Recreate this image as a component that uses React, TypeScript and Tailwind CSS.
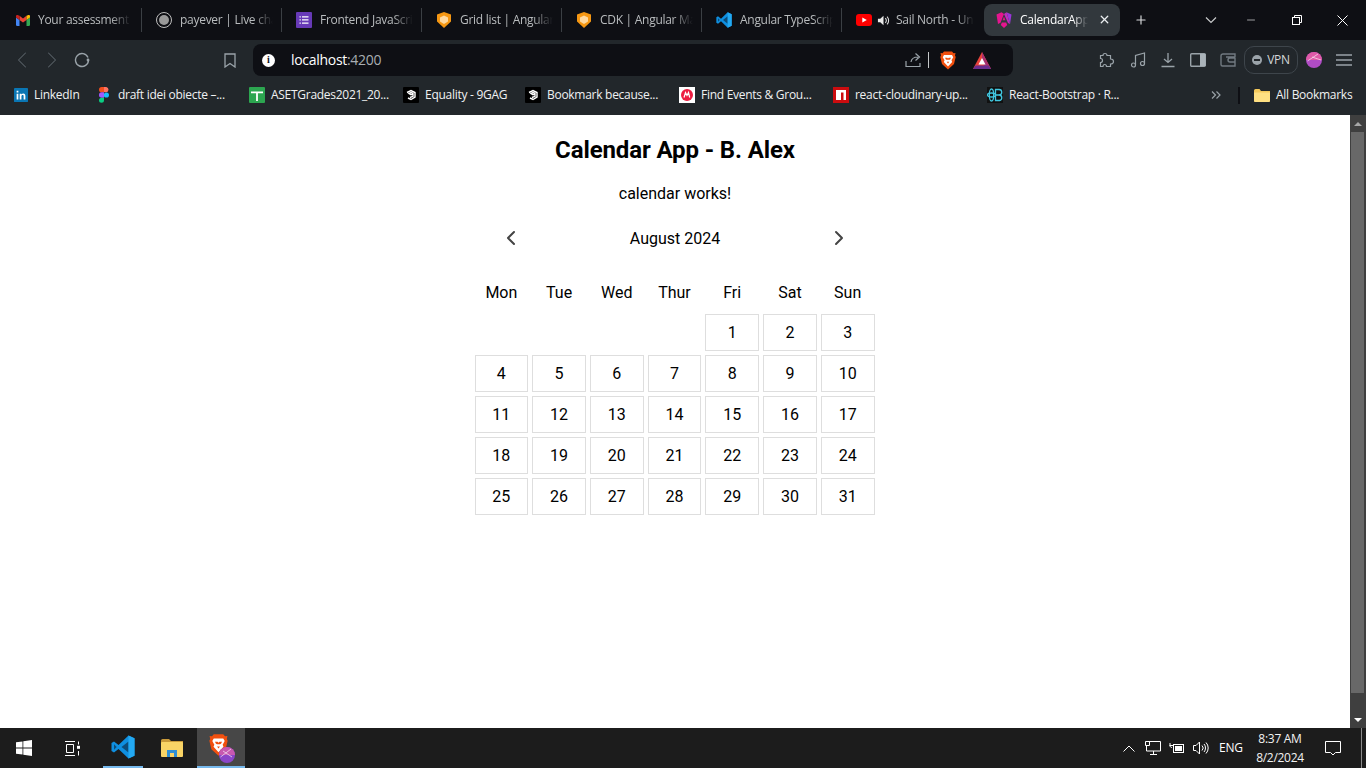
import { ChevronLeft, ChevronRight, Plus, X, Minus } from "lucide-react";
import type { ReactNode } from "react";

const uiFont = "font-['Open_Sans','Noto_Sans',sans-serif] tracking-[-0.28px]";

function Gmail() {
  return (
    <svg viewBox="0 0 16 13" className="w-[14px] h-[11px] shrink-0" preserveAspectRatio="none">
      <path d="M0 3v8.500A1.500 1.500 0 0 0 1.500 13H4V6z" fill="#4285f4" />
      <path d="M12 6v7h2.500a1.500 1.500 0 0 0 1.500-1.500V3z" fill="#34a853" />
      <path d="M4 6l4 3 4-3V1L8 4 4 1z" fill="#ea4335" />
      <path d="M0 3l4 3V1L2.500.2A1.600 1.600 0 0 0 0 2z" fill="#c5221f" />
      <path d="M12 1v5l4-3V2A1.600 1.600 0 0 0 13.500.2z" fill="#fbbc04" />
    </svg>
  );
}

function RecordIcon() {
  return (
    <div className="w-4 h-4 rounded-full border border-[#bdbdbd] flex items-center justify-center shrink-0">
      <div className="w-[10px] h-[10px] rounded-full bg-[#9a9a9a]" />
    </div>
  );
}

function FormIcon() {
  return (
    <svg viewBox="0 0 16 16" className="w-4 h-4 shrink-0">
      <rect width="16" height="16" rx="1" fill="#673ab7" />
      <path d="M3.500 4.200h1.300v1.300H3.500zM6 4.200h6.500v1.300H6zM3.500 7.300h1.300v1.300H3.500zM6 7.300h6.500v1.300H6zM3.500 10.400h1.300v1.300H3.500zM6 10.400h6.500v1.300H6z" fill="#fff" />
    </svg>
  );
}

function ShieldIcon() {
  return (
    <svg viewBox="0 0 16 16" className="w-4 h-4 shrink-0">
      <path d="M8 0l7 2.500v7L8 16 1 9.500v-7z" fill="#f59713" />
      <path d="M8 3.500l4 2v4l-4 2.500-4-2.500v-4z" fill="#ffd9a0" />
    </svg>
  );
}

function VsCode({ className }: { className: string }) {
  return (
    <svg viewBox="0 0 24 24" className={className}>
      <path d="M17.500 0.500L23.500 3.300V20.700L17.500 23.500L7.500 14L3 17.500L0.500 16V8L3 6.500L7.500 10z" fill="#0f8fe0" />
      <path d="M17.500 6.500L10.500 12L17.500 17.500zM3 9.200V14.800L5.700 12z" fill="#0b2a44" fillOpacity="0.65" />
      <path d="M17.500 0.500L23.500 3.300V20.700L17.500 23.500z" fill="#23a9f2" />
    </svg>
  );
}

function YoutubeIcon() {
  return (
    <svg viewBox="0 0 16 12" className="w-4 h-3 shrink-0">
      <rect width="16" height="12" rx="3" fill="#f00" />
      <path d="M6.300 3.500L10.800 6 6.300 8.500z" fill="#fff" />
    </svg>
  );
}

function SpeakerIcon() {
  return (
    <svg viewBox="0 0 14 14" className="w-[13px] h-[13px] shrink-0" fill="none">
      <path d="M1 5h2.500L7 2v10L3.500 9H1z" fill="#e8e8e8" />
      <path d="M9 4.500a3.500 3.500 0 0 1 0 5M10.800 2.800a6 6 0 0 1 0 8.400" stroke="#e8e8e8" strokeWidth="1.100" />
    </svg>
  );
}

function AngularIcon() {
  return (
    <svg viewBox="0 0 16 16" className="w-4 h-4 shrink-0">
      <path d="M10.500 0.200L15.500 2.500 14 12z" fill="#9a36d8" />
      <path d="M5.500 0.200L0.500 2.500 2 12 4.500 10.800 8 2z" fill="#e5158f" />
      <path d="M5.800 10.500h4.400L11.200 13 8 16 4.800 13z" fill="#e5158f" />
      <path d="M8 4.500L9.400 8.300H6.600z" fill="#e5158f" />
      <path d="M10.500 .2L8 2l4 9 2 1z" fill="#c22bbd" />
    </svg>
  );
}

type TabInfo = { title: string; icon: ReactNode };

const tabs: TabInfo[] = [
  { title: "Your assessment at", icon: <Gmail /> },
  { title: "payever | Live chat", icon: <RecordIcon /> },
  { title: "Frontend JavaScript", icon: <FormIcon /> },
  { title: "Grid list | Angular Material", icon: <ShieldIcon /> },
  { title: "CDK | Angular Material", icon: <ShieldIcon /> },
  { title: "Angular TypeScript", icon: <VsCode className="w-4 h-4 shrink-0" /> },
];

function Tab({ tab }: { tab: TabInfo }) {
  return (
    <div className="w-[140px] h-[24px] shrink-0 flex items-center pl-[14px] gap-[8px] border-r border-[#3b3f44]">
      {tab.icon}
      <div className="w-[93px] overflow-hidden whitespace-nowrap text-[12px] text-[#b9bcbe] [mask-image:linear-gradient(to_right,black_78%,transparent)]">
        {tab.title}
      </div>
    </div>
  );
}

function TabStrip() {
  return (
    <div className={`h-10 bg-[#0e0f14] flex items-center pl-[2px] shrink-0 ${uiFont}`}>
      {tabs.map((t) => (
        <Tab key={t.title} tab={t} />
      ))}
      <div className="w-[140px] h-[24px] shrink-0 flex items-center pl-[14px] gap-[5px]">
        <YoutubeIcon />
        <SpeakerIcon />
        <div className="w-[78px] overflow-hidden whitespace-nowrap text-[12px] text-[#b9bcbe] [mask-image:linear-gradient(to_right,black_78%,transparent)] ml-[1px]">
          Sail North - Un
        </div>
      </div>
      <div className="w-[136px] h-8 mt-[-1px] ml-[2px] shrink-0 rounded-[8px] bg-[#32383d] flex items-center pl-[12px] gap-[8px]">
        <AngularIcon />
        <div className="w-[68px] overflow-hidden whitespace-nowrap text-[12px] text-white [mask-image:linear-gradient(to_right,black_78%,transparent)]">
          CalendarApp
        </div>
        <X size={13} strokeWidth={2.4} className="text-[#eceff1] ml-[2px]" />
      </div>
      <Plus size={14} strokeWidth={2} className="text-[#d8dadb] ml-[14px]" />
      <div className="flex items-center ml-auto">
        <svg viewBox="0 0 12 8" className="w-3 h-2 mr-[28px]" fill="none">
          <path d="M1 1.500L6 6.500 11 1.500" stroke="#c8cacb" strokeWidth="1.200" />
        </svg>
        <Minus size={12} strokeWidth={1.200} className="text-white mr-[35px]" />
        <svg viewBox="0 0 10 10" className="w-[10px] h-[10px] mr-[35px]" fill="none" stroke="#fff" strokeWidth="1">
          <rect x="0.500" y="2.500" width="7" height="7" />
          <path d="M2.500 2.500V.5h7v7H7.500" />
        </svg>
        <svg viewBox="0 0 11 11" className="w-[11px] h-[11px] mr-[18px]" fill="none" stroke="#fff" strokeWidth="1">
          <path d="M.5.5l10 10M10.500.5l-10 10" />
        </svg>
      </div>
    </div>
  );
}

function BraveIcon({ className }: { className: string }) {
  return (
    <svg viewBox="0 0 16 18" className={className}>
      <path d="M4 0h8l1.500 1.700L15.500 1.500 15 4l.7 1.500-1.700 7L8 18 2 12.500.3 5.500 1 4 .5 1.500 2.500 1.700z" fill="#f1500f" />
      <path d="M4 3.500h8l1.200 2.200-1.700 3 .7 1.800L8 15l-4.200-4.500.7-1.800-1.700-3z" fill="#fff" />
      <path d="M5 6.200h2.200L8 7l.8-.8H11l-.9 1.800-.9.300H6.800l-.9-.3zM6.800 10.300h2.400L8 12z" fill="#f1500f" />
    </svg>
  );
}

function Toolbar() {
  const stroke = "#9aa3a9";
  return (
    <div className="h-10 bg-[#22272b] flex items-center shrink-0">
      <div className="w-[253px] flex items-center shrink-0 pl-[8px]">
        <ChevronLeft size={28} strokeWidth={0.9} className="text-[#596168] mr-[2px]" />
        <ChevronRight size={28} strokeWidth={0.9} className="text-[#596168] mr-[8px]" />
        <svg viewBox="0 0 16 16" className="w-4 h-4 mr-[134px]" fill="none">
          <path d="M14 5.500A6.500 6.500 0 1 0 14.500 8" stroke={stroke} strokeWidth="1.400" />
          <circle cx="14" cy="8" r="1.400" fill={stroke} />
        </svg>
        <svg viewBox="0 0 12 15" className="w-[12px] h-[15px]" fill="none">
          <path d="M1 1h10v13L6 10.500 1 14z" stroke={stroke} strokeWidth="1.300" />
        </svg>
      </div>
      <div className="w-[760px] h-8 rounded-[8px] bg-[#0e0f14] flex items-center pl-[9px] shrink-0">
        <div className="w-[13px] h-[13px] rounded-full bg-white flex items-center justify-center text-[#0e0f14] text-[10px] font-bold leading-none font-['Liberation_Serif',serif]">
          i
        </div>
        <div className="ml-[16px] text-[14px] leading-none font-['Open_Sans','Noto_Sans',sans-serif] tracking-[-0.3px]">
          <span className="text-white">localhost</span>
          <span className="text-[#a9aeb2]">:4200</span>
        </div>
        <svg viewBox="0 0 16 16" className="w-4 h-4 ml-auto" fill="none">
          <path d="M1 9v5.500h14V11M6 10c.5-3.500 3-5 7-5M10.500 1.500L14.500 5l-4 3.500" stroke={stroke} strokeWidth="1.200" />
        </svg>
        <div className="w-px h-4 bg-[#c5c8ca] ml-[7px]" />
        <BraveIcon className="w-4 h-[19px] ml-[11px]" />
        <svg viewBox="0 0 18 17" className="w-[18px] h-[17px] ml-[17px] mr-[22px]">
          <path d="M9 0L18 17H0z" fill="#e8423b" />
          <path d="M9 0L18 17H12L9 6z" fill="#a8306f" />
          <path d="M2.500 13.500h13L18 17H0z" fill="#6a2d8f" />
          <path d="M9 6l3.500 6.500h-7z" fill="#fff" />
        </svg>
      </div>
      <div className="flex items-center shrink-0 flex-1">
        <svg viewBox="0 0 16 16" className="w-4 h-4 ml-[86px]" fill="none">
          <path d="M6 1.500c1.500 0 2 1 2 2h3.500V7c1.500 0 3 .5 3 2.500S13 12 11.500 12v2.500H7.500c0-1.500-.5-2-1.800-2S4 13 4 14.500H1.500V10.500c1.200 0 2-.5 2-2s-1-2-2-2V3.500H4c0-1 .5-2 2-2z" stroke={stroke} strokeWidth="1.200" />
        </svg>
        <svg viewBox="0 0 16 16" className="w-4 h-4 ml-[15px]" fill="none" stroke={stroke} strokeWidth="1.200">
          <circle cx="3.500" cy="13" r="2" />
          <circle cx="12.500" cy="11.500" r="2" />
          <path d="M5.500 13V3.500L14.500 1v10.500" />
        </svg>
        <svg viewBox="0 0 16 16" className="w-4 h-4 ml-[14px]" fill="none" stroke={stroke} strokeWidth="1.300">
          <path d="M8 1v9.500M4 7l4 3.500L12 7M1.500 14.500h13" />
        </svg>
        <svg viewBox="0 0 16 14" className="w-4 h-[14px] ml-[14px]">
          <rect x="0.700" y="0.700" width="14.600" height="12.600" rx="1" fill="none" stroke={stroke} strokeWidth="1.400" />
          <rect x="10" y="1" width="5.500" height="12" fill="#aab3b9" />
        </svg>
        <svg viewBox="0 0 16 14" className="w-4 h-[14px] ml-[14px]" fill="none" stroke="#717a81" strokeWidth="1.400">
          <path d="M15 4V1H3a2 2 0 0 0-2 2v8.500A1.500 1.500 0 0 0 2.500 13H15V9M15 4H6M15 5H10a2 2 0 0 0 0 4h5z" />
        </svg>
        <div className={`ml-[8px] w-[54px] h-7 rounded-[10px] border border-[#3e454b] flex items-center justify-center gap-[5px] text-[12px] text-[#d4d7d9] ${uiFont}`}>
          <div className="w-[10px] h-[10px] rounded-full bg-[#9ba3a9] flex items-center justify-center">
            <div className="w-[6px] h-[1.500px] bg-[#22272b]" />
          </div>
          VPN
        </div>
        <svg viewBox="0 0 16 16" className="w-4 h-4 ml-[8px]" fill="none">
          <circle cx="8" cy="8" r="8" fill="#b04cc5" />
          <path d="M0 8a8 8 0 0 1 16 0z" fill="#e05aa8" />
          <path d="M1.500 9L12 2M6 5l9 3" stroke="#f7d6e8" strokeWidth="0.800" />
        </svg>
        <svg viewBox="0 0 16 12" className="w-4 h-3 ml-[14px]" fill="none" stroke={stroke} strokeWidth="1.300">
          <path d="M0 1h16M0 6h16M0 11h16" />
        </svg>
      </div>
    </div>
  );
}

function Bookmark({ icon, label, width }: { icon: ReactNode; label: string; width: string }) {
  return (
    <div className={`${width} shrink-0 flex items-center gap-[6px] whitespace-nowrap`}>
      <div className="w-4 h-4 shrink-0 flex items-center justify-center">{icon}</div>
      <span>{label}</span>
    </div>
  );
}

function NineGag() {
  return (
    <svg viewBox="0 0 16 16" className="w-4 h-4">
      <rect width="16" height="16" rx="1" fill="#000" />
      <path d="M4 5.500L8 3.500l4 2v4.500L8 12.500 5 11M10 6.500L8 5.500 6 6.500 8 7.800l2-1v2.500L7 10.500" fill="none" stroke="#fff" strokeWidth="1.400" />
    </svg>
  );
}

function BookmarksBar() {
  return (
    <div className={`h-[35px] bg-[#22272b] flex items-center pl-[12px] text-[12px] text-[#f0f1f2] shrink-0 pb-[5px] ${uiFont}`}>
      <Bookmark
        width="w-[84px]"
        label="LinkedIn"
        icon={
          <svg viewBox="0 0 16 16" className="w-[14px] h-[14px] ml-px">
            <rect width="16" height="16" rx="1" fill="#0a76b4" />
            <path d="M3 6.500h2V13H3zM3 3.200h2v2H3zM6.500 6.500h2v1c.5-.8 1.200-1.200 2.200-1.200 1.700 0 2.300 1.100 2.300 2.900V13h-2V9.500c0-1-.3-1.500-1.100-1.500-.9 0-1.400.6-1.400 1.700V13h-2z" fill="#fff" />
          </svg>
        }
      />
      <Bookmark
        width="w-[153px]"
        label="draft idei obiecte –..."
        icon={
          <svg viewBox="0 0 10 16" className="w-[10px] h-4">
            <path d="M0 2.700A2.700 2.700 0 0 1 2.700 0H5v5.300H2.700A2.700 2.700 0 0 1 0 2.700z" fill="#f24e1e" />
            <path d="M5 0h2.300a2.700 2.700 0 0 1 0 5.300H5z" fill="#ff7262" />
            <path d="M0 8a2.700 2.700 0 0 1 2.700-2.700H5v5.400H2.700A2.700 2.700 0 0 1 0 8z" fill="#a259ff" />
            <circle cx="7.400" cy="8" r="2.600" fill="#1abcfe" />
            <path d="M0 13.300a2.700 2.700 0 0 1 2.700-2.600H5v2.600a2.500 2.500 0 0 1-5 0z" fill="#0acf83" />
          </svg>
        }
      />
      <Bookmark
        width="w-[154px]"
        label="ASETGrades2021_20..."
        icon={
          <svg viewBox="0 0 16 16" className="w-4 h-4">
            <rect width="16" height="16" rx="1" fill="#2ca650" />
            <path d="M2 4.500H14V6.300H8.900V14H7.100V6.300H2z" fill="#fff" />
          </svg>
        }
      />
      <Bookmark width="w-[122px]" label="Equality - 9GAG" icon={<NineGag />} />
      <Bookmark width="w-[154px]" label="Bookmark because..." icon={<NineGag />} />
      <Bookmark
        width="w-[154px]"
        label="Find Events & Grou..."
        icon={
          <svg viewBox="0 0 16 16" className="w-4 h-4">
            <rect width="16" height="16" fill="#fff" />
            <circle cx="8" cy="8" r="6" fill="#ed1c40" />
            <path d="M5 10.500l1.500-5 1.500 3 1.500-3 1.200 5" fill="none" stroke="#fff" strokeWidth="1.200" />
          </svg>
        }
      />
      <Bookmark
        width="w-[154px]"
        label="react-cloudinary-up..."
        icon={
          <svg viewBox="0 0 16 16" className="w-4 h-4">
            <rect width="16" height="16" fill="#cb0c0f" />
            <path d="M3 3h10v10h-2.500V5.500H8V13H3z" fill="#fff" />
          </svg>
        }
      />
      <Bookmark
        width="w-[224px]"
        label="React-Bootstrap · R..."
        icon={
          <svg viewBox="0 0 16 16" className="w-4 h-4" fill="none" stroke="#41c7e0" strokeWidth="1.300">
            <rect width="16" height="16" fill="#111" stroke="none" />
            <ellipse cx="4.500" cy="8" rx="2.200" ry="6" />
            <ellipse cx="4.500" cy="8" rx="4" ry="2" />
            <path d="M8.500 2.500h3.500a2.700 2.700 0 0 1 0 5.500H8.500zM8.500 8h4a2.800 2.800 0 0 1 0 5.500h-4z" />
          </svg>
        }
      />
      <svg viewBox="0 0 10 8" className="w-[10px] h-2" fill="none" stroke="#99a1a7" strokeWidth="1.200">
        <path d="M1 .5L4.500 4 1 7.500M5.500 .5L9 4 5.500 7.500" />
      </svg>
      <div className="w-[2px] h-[17px] bg-[#0e0f14] ml-[17px] mr-[14px]" />
      <svg viewBox="0 0 16 13" className="w-4 h-[13px] mr-[6px] shrink-0">
        <path d="M0 1.500A1.500 1.500 0 0 1 1.500 0h4L7 2H16v9.500a1.500 1.500 0 0 1-1.500 1.500h-13A1.500 1.500 0 0 1 0 11.500z" fill="#f5c95a" />
        <path d="M0 3.500h16v8a1.500 1.500 0 0 1-1.500 1.500h-13A1.500 1.500 0 0 1 0 11.500z" fill="#ffe082" />
      </svg>
      <span className="whitespace-nowrap">All Bookmarks</span>
    </div>
  );
}

const weekDays = ["Mon", "Tue", "Wed", "Thur", "Fri", "Sat", "Sun"];
const days = Array.from({ length: 31 }, (_, i) => i + 1);

function Calendar() {
  return (
    <div className="flex-1 min-w-0 flex flex-col items-center font-['Roboto',sans-serif] text-[16px] text-black">
      <h1 className="text-[24px] font-bold leading-[28px] mt-[21px] tracking-[-0.12px]">Calendar App - B. Alex</h1>
      <p className="leading-[19px] mt-[20px]">calendar works!</p>
      <div className="w-[400px] mt-[23px] h-[24px] flex items-center justify-between px-[24px]">
        <ChevronLeft size={24} strokeWidth={2} className="text-[#444]" />
        <span className="leading-[19px]">August 2024</span>
        <ChevronRight size={24} strokeWidth={2} className="text-[#444]" />
      </div>
      <div className="w-[400px] ml-[-1px] grid grid-cols-7 gap-x-[4px] mt-[33px] h-[19px]">
        {weekDays.map((d) => (
          <div key={d} className="text-center leading-[19px]">
            {d}
          </div>
        ))}
      </div>
      <div className="w-[400px] ml-[-1px] grid grid-cols-7 gap-[4px] mt-[12px]">
        <div className="col-span-4" />
        {days.map((d) => (
          <div key={d} className="h-[37px] border border-[#dedede] flex items-center justify-center">
            {d}
          </div>
        ))}
      </div>
    </div>
  );
}

function Scrollbar() {
  return (
    <div className="w-4 bg-[#3f3f3f] flex flex-col shrink-0">
      <div className="h-[17px] flex items-center justify-center">
        <div className="w-0 h-0 border-x-[4px] border-x-transparent border-b-[4px] border-b-[#a6a6a6]" />
      </div>
      <div className="w-[13px] ml-px h-[561px] bg-[#686868]" />
      <div className="mt-auto h-[17px] flex items-center justify-center">
        <div className="w-0 h-0 border-x-[4px] border-x-transparent border-t-[4px] border-t-white" />
      </div>
    </div>
  );
}

function Taskbar() {
  return (
    <div className={`h-10 bg-[#1c1c1c] flex items-center shrink-0 ${uiFont}`}>
      <svg viewBox="0 0 16 16" className="w-4 h-4 ml-4">
        <path d="M0 2.300L6.500 1.400V7.600H0zM7.300 1.300L16 0V7.600H7.300zM0 8.400H6.500V14.600L0 13.700zM7.300 8.400H16V16L7.300 14.700z" fill="#fff" />
      </svg>
      <svg viewBox="0 0 16 15" className="w-4 h-[15px] ml-[32px]" fill="none" stroke="#fff" strokeWidth="1">
        <path d="M1 .5h10M1 14.500h10M2.500 3.500h7v8h-7zM14.500 .5v3M14.500 10v4.500" />
        <rect x="13" y="4.800" width="3" height="3" fill="#fff" stroke="none" />
      </svg>
      <div className="w-10 h-10 ml-[23px] flex items-center justify-center border-b-2 border-[#76b9ed]">
        <VsCode className="w-6 h-6" />
      </div>
      <svg viewBox="0 0 22 18" className="w-[22px] h-[18px] ml-[18px]">
        <path d="M0 1.500A1.500 1.500 0 0 1 1.500 0H8l2 2h12v3H0z" fill="#c99a3a" />
        <rect y="3" width="22" height="15" rx="1" fill="#f9d466" />
        <path d="M6 11h10v7h-3v-4H9v4H6z" fill="#2f8fd5" />
      </svg>
      <div className="w-12 h-10 ml-[14px] bg-[#474747] border-b-2 border-[#76b9ed] flex items-center justify-center relative">
        <BraveIcon className="w-[19px] h-[22px] -ml-[5px] -mt-[4px]" />
        <svg viewBox="0 0 16 16" className="w-4 h-4 absolute left-[22px] top-[19px]" fill="none">
          <circle cx="8" cy="8" r="8" fill="#8c45c8" />
          <path d="M0 8a8 8 0 0 1 16 0z" fill="#c858b0" />
          <path d="M1.500 10L12 2M4 4l9 6" stroke="#f3d8ee" strokeWidth="0.800" />
        </svg>
      </div>
      <div className="ml-auto flex items-center self-stretch text-white">
        <svg viewBox="0 0 12 7" className="w-3 h-[7px]" fill="none" stroke="#fff" strokeWidth="1">
          <path d="M.5 6.500L6 1l5.500 5.500" />
        </svg>
        <svg viewBox="0 0 16 14" className="w-4 h-[14px] ml-[10px]" fill="none" stroke="#fff" strokeWidth="1">
          <path d="M4 .5h11.500V10H1.500V5M8.500 10v3M5 13.500h7M.5 .5h4v4h-4z" />
        </svg>
        <svg viewBox="0 0 16 12" className="w-4 h-3 ml-[8px]" fill="none" stroke="#fff" strokeWidth="1">
          <rect x="4.500" y="2.500" width="10" height="8" />
          <rect x="6" y="4" width="7" height="5" fill="#fff" stroke="none" />
          <path d="M.5 3.500h3.500M1 1v2.500c0 1.500 1 2 2 2" />
        </svg>
        <svg viewBox="0 0 16 14" className="w-4 h-[14px] ml-[8px]" fill="none" stroke="#fff" strokeWidth="1">
          <path d="M.5 4.500H3L6.500 1v12L3 9.500H.5zM9 4.500a3.500 3.500 0 0 1 0 5M11 3a6 6 0 0 1 0 8M13 1.500a8 8 0 0 1 0 11" />
        </svg>
        <span className="text-[12px] ml-[10px] w-[24px]">ENG</span>
        <div className="w-[56px] ml-[9px] text-center text-[12px] leading-[19px] text-[#f2f2f2]">
          <div>8:37 AM</div>
          <div>8/2/2024</div>
        </div>
        <svg viewBox="0 0 16 15" className="w-4 h-[15px] ml-[17px] mr-[20px]" fill="none" stroke="#fff" strokeWidth="1">
          <path d="M.5 .5h15v11h-5l-2.500 2.500L5.500 11.500h-5z" />
        </svg>
        <div className="w-px self-stretch bg-[#8a8a8a] mr-[4px]" />
      </div>
    </div>
  );
}

export default function App() {
  return (
    <div className="w-[1366px] h-[768px] flex flex-col overflow-hidden bg-white">
      <TabStrip />
      <Toolbar />
      <BookmarksBar />
      <div className="flex-1 min-h-0 flex">
        <Calendar />
        <Scrollbar />
      </div>
      <Taskbar />
    </div>
  );
}
